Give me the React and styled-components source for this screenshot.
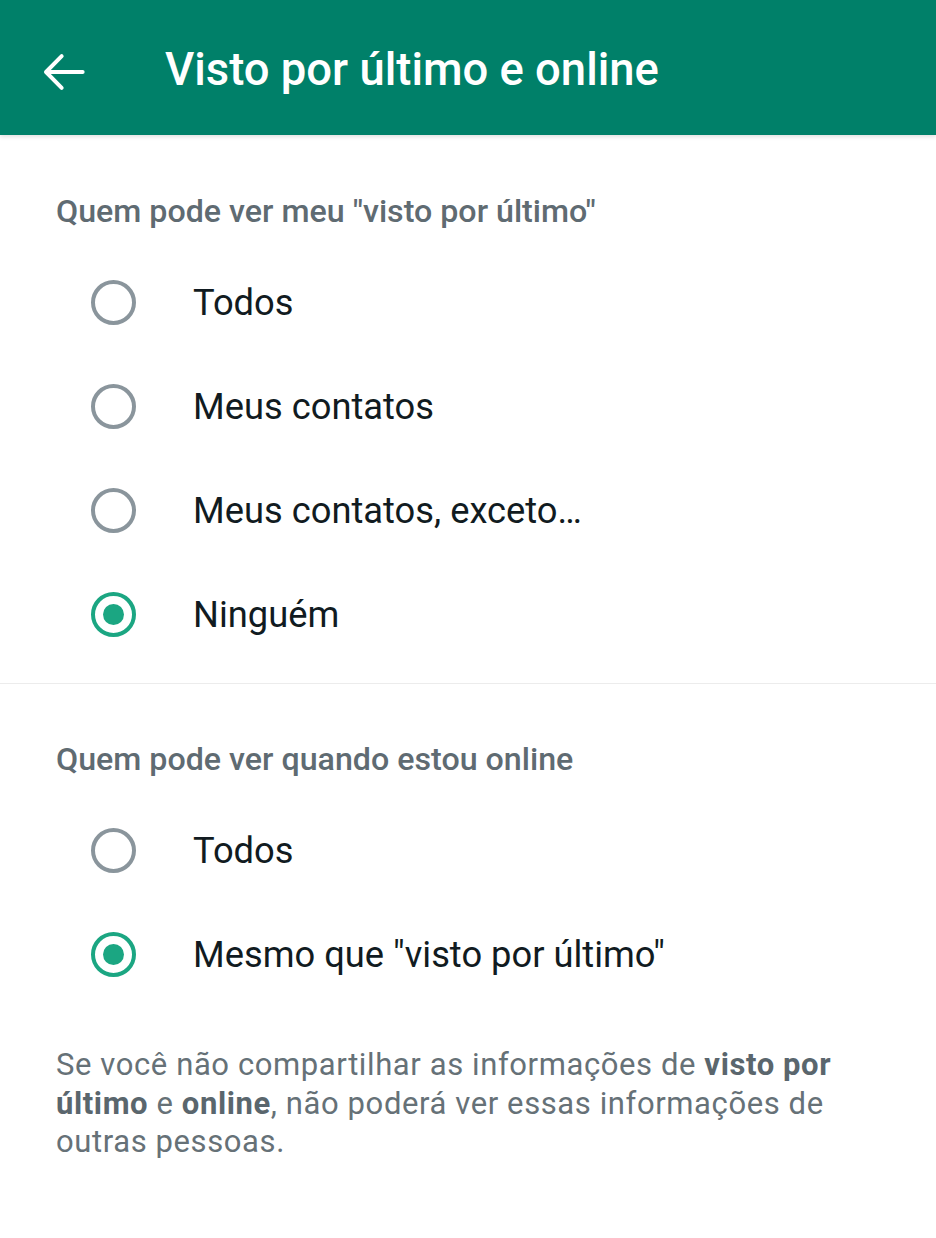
import React from "react";
import styled, { createGlobalStyle } from "styled-components";

const Global = createGlobalStyle`
  html, body { margin: 0; padding: 0; background: #ffffff; }
  body { font-family: Roboto, "Noto Sans", "Liberation Sans", sans-serif; }
`;

const Page = styled.div`
  width: 936px;
  min-height: 1238px;
  background: #fff;
`;

const Header = styled.header`
  height: 135px;
  background: #008069;
  display: flex;
  align-items: center;
  box-shadow: 0 2px 4px rgba(0, 0, 0, 0.12);
  position: relative;
`;

const BackButton = styled.button`
  width: 56px;
  height: 56px;
  margin-left: 36px;
  margin-top: 8px;
  padding: 0;
  border: 0;
  background: transparent;
  display: flex;
  align-items: center;
  justify-content: center;
`;

const Title = styled.h1`
  margin: 4px 0 0 73px;
  font-size: 45.4px;
  font-weight: 500;
  color: #ffffff;
  letter-spacing: 0;
`;

const Section = styled.section`
  padding: ${(p) => p.$pad};
  border-bottom: ${(p) => (p.$divider ? "1.5px solid #ececec" : "none")};
`;

const SectionTitle = styled.h2`
  margin: 0 0 0 56px;
  font-size: 32.2px;
  font-weight: 500;
  color: #5f6b72;
  line-height: 40px;
`;

const RadioList = styled.div`
  display: flex;
  flex-direction: column;
  margin-top: 19px;
`;

const Row = styled.label`
  height: 104px;
  display: flex;
  align-items: center;
  padding-left: 91px;
`;

const Radio = styled.span`
  width: 45px;
  height: 45px;
  box-sizing: border-box;
  border-radius: 50%;
  border: 4px solid ${(p) => (p.$checked ? "#1ba682" : "#8a959c")};
  display: flex;
  align-items: center;
  justify-content: center;
  flex-shrink: 0;
  &::after {
    content: "";
    width: 21px;
    height: 21px;
    border-radius: 50%;
    background: #1ba682;
    display: ${(p) => (p.$checked ? "block" : "none")};
  }
`;

const RowLabel = styled.span`
  margin-left: 57px;
  font-size: 36.3px;
  color: #111b21;
  letter-spacing: 0;
`;

const Note = styled.p`
  margin: 0;
  padding: 0 56px;
  font-size: 31px;
  line-height: 38.5px;
  letter-spacing: 0.6px;
  color: #667177;
  b {
    font-weight: 700;
    color: #5a666d;
  }
`;

const RadioOption = ({ label, checked }) => (
  <Row>
    <Radio $checked={checked} />
    <RowLabel>{label}</RowLabel>
  </Row>
);

export default function App() {
  return (
    <Page>
      <Global />
      <Header>
        <BackButton aria-label="Voltar">
          <svg width="56" height="56" viewBox="0 0 24 24" fill="none" stroke="#fff" strokeWidth="1.7" strokeLinecap="round" strokeLinejoin="round">
            <path d="M20 12H4.5" />
            <path d="M11 5.2 4.3 12l6.7 6.8" />
          </svg>
        </BackButton>
        <Title>Visto por último e online</Title>
      </Header>

      <Section $pad="56px 0 17px" $divider>
        <SectionTitle>Quem pode ver meu "visto por último"</SectionTitle>
        <RadioList>
          <RadioOption label="Todos" />
          <RadioOption label="Meus contatos" />
          <RadioOption label="Meus contatos, exceto…" />
          <RadioOption label="Ninguém" checked />
        </RadioList>
      </Section>

      <Section $pad="55px 0 0">
        <SectionTitle>Quem pode ver quando estou online</SectionTitle>
        <RadioList>
          <RadioOption label="Todos" />
          <RadioOption label={'Mesmo que "visto por último"'} checked />
        </RadioList>
      </Section>

      <Section $pad="40px 0 0">
        <Note>
          Se você não compartilhar as informações de <b>visto por último</b> e <b>online</b>, não poderá ver essas informações de outras pessoas.
        </Note>
      </Section>
    </Page>
  );
}
